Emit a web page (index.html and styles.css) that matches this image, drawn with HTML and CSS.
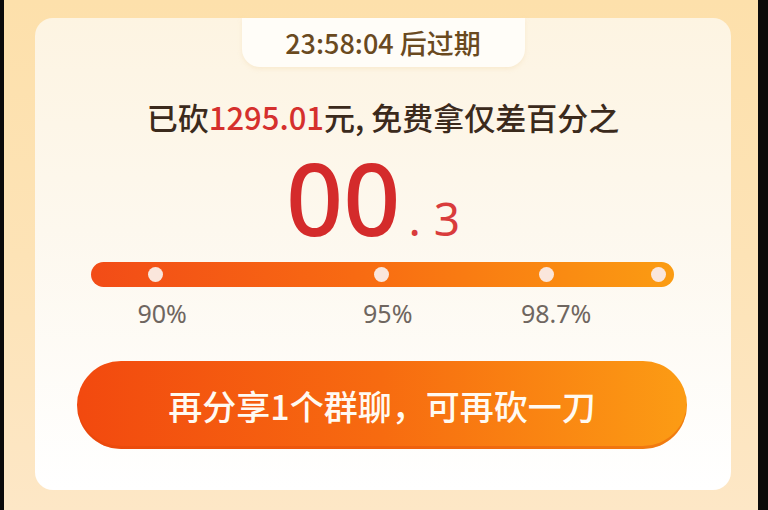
FILE: index.html
```html
<!DOCTYPE html>
<html lang="zh-CN">
<head>
<meta charset="utf-8">
<link rel="stylesheet" href="styles.css">
</head>
<body>
<div class="frame">
  <div class="card">
    <div class="timer">23:58:04 后过期</div>
    <div class="headline">已砍<span class="amount">1295.01</span>元, 免费拿仅差百分之</div>
    <div class="big"><span class="int">00</span><span class="dot">.</span><span class="frac">3</span></div>
    <div class="progress">
      <div class="bar">
        <span class="pin" style="left:11%"></span>
        <span class="pin" style="left:49.8%"></span>
        <span class="pin" style="left:78.1%"></span>
        <span class="pin" style="left:97.4%"></span>
      </div>
      <div class="labels">
        <span class="label" style="left:12.2%">90%</span>
        <span class="label" style="left:50.9%">95%</span>
        <span class="label" style="left:79.8%">98.7%</span>
      </div>
    </div>
    <button class="share">再分享1个群聊，可再砍一刀</button>
  </div>
</div>
</body>
</html>
```

FILE: styles.css
```css
html, body {
  margin: 0;
  padding: 0;
  background: #0b0a0a;
  height: 510px;
  overflow: hidden;
}
body {
  font-family: "Noto Sans CJK SC", "Noto Sans", sans-serif;
}
.frame {
  margin: 0 10px 0 4px;
  height: 510px;
  padding: 18px 27px 0 31px;
  box-sizing: border-box;
  background: linear-gradient(180deg, #fde0ab 0%, #fde3b6 50%, #fde7c6 100%);
}
.card {
  width: 696px;
  height: 472px;
  box-sizing: border-box;
  border-radius: 18px;
  background: linear-gradient(180deg, #fdf4e2 0%, #fdf8ee 45%, #ffffff 100%);
  display: flex;
  flex-direction: column;
  align-items: center;
}
.timer {
  width: 283px;
  height: 49px;
  box-sizing: border-box;
  background: #fffdf8;
  border-radius: 0 0 18px 18px;
  color: #6a4a1f;
  font-size: 27px;
  font-weight: 500;
  line-height: 49px;
  text-align: center;
  box-shadow: 0 2px 4px rgba(240, 215, 170, 0.35);
}
.headline {
  margin-top: 32px;
  height: 36px;
  line-height: 36px;
  font-size: 31px;
  font-weight: 500;
  color: #3b2a1c;
}
.amount {
  color: #d5302d;
}
.big {
  margin-top: 12px;
  height: 100px;
  line-height: 100px;
  color: #d42b2b;
  display: flex;
  align-items: baseline;
  margin-right: 20px;
  font-family: "Noto Sans", sans-serif;
}
.int {
  font-size: 100px;
  font-weight: 500;
}
.dot {
  font-size: 46px;
  margin-left: 8px;
  margin-right: 13px;
  color: #d93c3c;
}
.frac {
  font-size: 46px;
  color: #d93c3c;
}
.progress {
  margin-top: 15px;
  width: 583px;
  align-self: flex-start;
  margin-left: 56px;
}
.bar {
  position: relative;
  height: 25px;
  border-radius: 13px;
  background: linear-gradient(90deg, #f24c17 0%, #f86a12 45%, #fb9c12 100%);
}
.pin {
  position: absolute;
  top: 5px;
  width: 15px;
  height: 15px;
  margin-left: -7.5px;
  border-radius: 50%;
  background: #fae6dc;
}
.labels {
  position: relative;
  margin-top: 11px;
  height: 30px;
}
.label {
  position: absolute;
  top: 0;
  transform: translateX(-50%);
  font-family: "Noto Sans", sans-serif;
  font-size: 25px;
  line-height: 30px;
  color: #6f6660;
}
.share {
  margin-top: 33px;
  width: 610px;
  height: 88px;
  border: none;
  border-radius: 44px;
  background: linear-gradient(90deg, #f2490f 0%, #f76b10 50%, #fc9c14 100%);
  box-shadow: 0 -3px 0 rgba(220, 70, 10, 0.35) inset;
  color: #fffaf2;
  font-family: "Noto Sans CJK SC", "Noto Sans", sans-serif;
  font-size: 34px;
  font-weight: 500;
  padding: 0;
  margin-left: -2px;
}
```
